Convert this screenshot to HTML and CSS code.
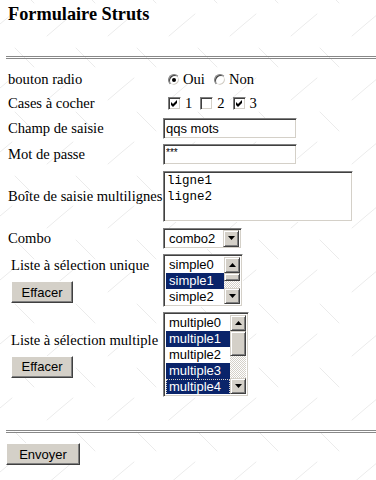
FILE: index.html
```html
<!DOCTYPE html>
<html lang="fr">
<head>
    <meta charset="UTF-8">
    <meta name="viewport" content="width=device-width, initial-scale=1.0">
    <title>Formulaire Struts</title>
    <link rel="stylesheet" href="styles.css">
</head>
<body>
    <h1 class="title">Formulaire Struts</h1>
    <hr class="rule">

    <form class="form" onsubmit="return false">
        <div class="lbl">bouton radio</div>
        <div class="ctl choices">
            <span class="radio on"></span><span class="opt">Oui</span>
            <span class="radio"></span><span class="opt">Non</span>
        </div>

        <div class="lbl">Cases à cocher</div>
        <div class="ctl choices">
            <span class="check"><svg width="7" height="7" viewBox="0 0 7 7"><path d="M0 2L2 4L6 0L6 3L2 7L0 5Z"/></svg></span><span class="cb-text">1</span>
            <span class="check"></span><span class="cb-text">2</span>
            <span class="check"><svg width="7" height="7" viewBox="0 0 7 7"><path d="M0 2L2 4L6 0L6 3L2 7L0 5Z"/></svg></span><span class="cb-text">3</span>
        </div>

        <div class="lbl">Champ de saisie</div>
        <div class="ctl"><input class="field text" type="text" value="qqs mots"></div>

        <div class="lbl">Mot de passe</div>
        <div class="ctl"><input class="field text pass" type="text" value="***"></div>

        <div class="lbl">Boîte de saisie multilignes</div>
        <div class="ctl"><textarea class="field area">ligne1
ligne2</textarea></div>

        <div class="lbl">Combo</div>
        <div class="ctl">
            <div class="field combo">
                <span class="combo-text">combo2</span>
                <span class="raised sbtn"><svg width="7" height="4" viewBox="0 0 7 4"><path d="M0 0H7L3.5 4Z"/></svg></span>
            </div>
        </div>

        <div class="lbl group">
            <div>Liste à sélection unique</div>
            <button class="push clear" type="button">Effacer</button>
        </div>
        <div class="ctl">
            <div class="field list simple">
                <div class="items">
                    <div class="item">simple0</div>
                    <div class="item sel">simple1</div>
                    <div class="item">simple2</div>
                </div>
                <div class="sbar">
                    <span class="raised sbtn"><svg width="7" height="4" viewBox="0 0 7 4"><path d="M0 4H7L3.5 0Z"/></svg></span>
                    <span class="raised thumb small"></span>
                    <span class="track"></span>
                    <span class="raised sbtn"><svg width="7" height="4" viewBox="0 0 7 4"><path d="M0 0H7L3.5 4Z"/></svg></span>
                </div>
            </div>
        </div>

        <div class="lbl group">
            <div>Liste à sélection multiple</div>
            <button class="push clear" type="button">Effacer</button>
        </div>
        <div class="ctl">
            <div class="field list multi">
                <div class="items">
                    <div class="item">multiple0</div>
                    <div class="item sel">multiple1</div>
                    <div class="item">multiple2</div>
                    <div class="item sel">multiple3</div>
                    <div class="item sel focus">multiple4</div>
                </div>
                <div class="sbar">
                    <span class="raised sbtn"><svg width="7" height="4" viewBox="0 0 7 4"><path d="M0 4H7L3.5 0Z"/></svg></span>
                    <span class="raised thumb big"></span>
                    <span class="track"></span>
                    <span class="raised sbtn"><svg width="7" height="4" viewBox="0 0 7 4"><path d="M0 0H7L3.5 4Z"/></svg></span>
                </div>
            </div>
        </div>
    </form>

    <hr class="rule bottom">
    <button class="push send" type="button">Envoyer</button>
</body>
</html>
```

FILE: styles.css
```css
body {
    margin: 0;
    padding: 0 0 0 6px;
    font-family: "Liberation Serif", "Times New Roman", serif;
    font-size: 14.6px;
    color: #000;
    background-color: #fff;
    background-image: url("data:image/svg+xml,%3Csvg xmlns='http://www.w3.org/2000/svg' width='61' height='64'%3E%3Cg stroke='%23ebebeb' stroke-width='1' stroke-linecap='round' fill='none'%3E%3Cpath d='M15 48L31 64M31 0L34 3'/%3E%3Cpath d='M47 36L61 24M0 24L12 14'/%3E%3C/g%3E%3C/svg%3E");
}

.title {
    margin: 0 0 0 2px;
    padding-top: 4px;
    font-size: 18.3px;
    line-height: 21px;
    font-weight: bold;
}

.rule {
    margin: 31px 0 0;
    height: 1px;
    border: 0;
    border-top: 1px solid #888;
    border-bottom: 1px solid #888;
}

.rule.bottom {
    margin-top: 30px;
}

/* form table */
.form {
    display: grid;
    grid-template-columns: 155px 1fr;
    grid-template-rows: 23px 24px 26px 27px 57px 26px 58px 91px;
    align-items: center;
    margin: 9px 0 0 2px;
}

.lbl {
    white-space: nowrap;
    line-height: 17px;
}

.lbl.group {
    padding-left: 3px;
}

.ctl {
    display: flex;
    align-items: center;
}

.choices {
    padding-left: 5px;
}

/* windows classic controls */
.radio {
    position: relative;
    width: 12px;
    height: 12px;
    box-sizing: border-box;
    border-radius: 50%;
    border: 1px solid;
    border-color: #808080 #fff #fff #808080;
    box-shadow: inset 1px 1px #404040, inset -1px -1px #d4d0c8;
    background: #fff;
}

.radio.on::after {
    content: '';
    position: absolute;
    left: 3px;
    top: 3px;
    width: 4px;
    height: 4px;
    border-radius: 50%;
    background: #000;
}

.opt {
    margin-left: 3px;
    margin-right: 9px;
}

.check {
    display: flex;
    align-items: center;
    justify-content: center;
    width: 13px;
    height: 13px;
    box-sizing: border-box;
    border: 1px solid;
    border-color: #808080 #fff #fff #808080;
    box-shadow: inset 1px 1px #404040, inset -1px -1px #d4d0c8;
    background: #fff;
}

.cb-text {
    margin-left: 4px;
    margin-right: 8px;
}

.field {
    box-sizing: border-box;
    margin: 0;
    border: 1px solid;
    border-color: #808080 #fff #fff #808080;
    box-shadow: inset 1px 1px #404040, inset -1px -1px #d4d0c8;
    background: #fff;
    color: #000;
    font: 13px "Liberation Sans", Arial, sans-serif;
    outline: none;
}

.text {
    width: 134px;
    height: 21px;
    padding: 0 2px;
}

.pass {
    font-size: 10px;
    padding-bottom: 4px;
}

.area {
    width: 190px;
    height: 51px;
    padding: 1px 3px;
    resize: none;
    overflow: hidden;
    font: 12.5px/16px "Liberation Mono", "Courier New", monospace;
}

.combo {
    display: flex;
    align-items: center;
    justify-content: space-between;
    width: 79px;
    height: 21px;
    padding: 2px;
}

.combo-text {
    padding-left: 3px;
}

.raised {
    display: flex;
    align-items: center;
    justify-content: center;
    box-sizing: border-box;
    background: #d4d0c8;
    border: 1px solid;
    border-color: #d4d0c8 #404040 #404040 #d4d0c8;
    box-shadow: inset 1px 1px #fff, inset -1px -1px #808080;
}

.sbtn {
    width: 16px;
    height: 16px;
    flex: none;
}

.combo .sbtn {
    height: 17px;
}

/* list boxes */
.list {
    display: flex;
    padding: 2px;
}

.list.simple {
    width: 80px;
    height: 53px;
}

.list.multi {
    width: 86px;
    height: 85px;
}

.items {
    flex: 1;
    overflow: hidden;
}

.item {
    height: 16px;
    line-height: 16px;
    padding-left: 3px;
    white-space: nowrap;
}

.item.sel {
    background: #0a246a;
    color: #fff;
}

.item.focus {
    outline: 1px dotted #d4d0c8;
    outline-offset: -1px;
}

.sbar {
    display: flex;
    flex-direction: column;
    width: 16px;
}

.thumb.small {
    height: 8px;
}

.thumb.big {
    height: 25px;
}

.track {
    flex: 1;
    background: repeating-conic-gradient(#fff 0 25%, #d4d0c8 0 50%) 0 0 / 2px 2px;
}

/* buttons */
.push {
    display: block;
    height: 22px;
    padding: 0;
    box-sizing: border-box;
    background: #d4d0c8;
    color: #000;
    font: 13px "Liberation Sans", Arial, sans-serif;
    border: 1px solid;
    border-color: #fff #404040 #404040 #fff;
    box-shadow: inset -1px -1px #808080;
}

.clear {
    width: 62px;
    margin-top: 7px;
}

.send {
    width: 74px;
    margin-top: 10px;
}
```
